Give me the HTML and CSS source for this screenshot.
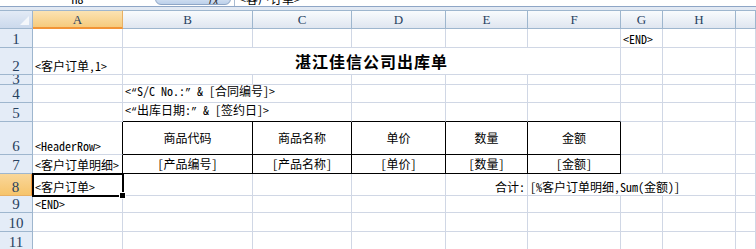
FILE: index.html
```html
<!DOCTYPE html>
<html>
	<head>
		<meta charset="utf-8">
		<title>出库单模板</title>
		<link rel="stylesheet" href="styles.css">
	</head>
	<body>
		<div class="fbar">
			<div class="namebox"><span>H8</span></div>
			<div class="fxbtn"><span>fx</span></div>
			<div class="formula"><span>&lt;客户订单&gt;</span></div>
		</div>
		<div class="strip"></div>
		<div class="sheet">
			<!-- column headers -->
			<div class="corner"></div>
			<div class="ch sel">A</div>
			<div class="ch">B</div>
			<div class="ch">C</div>
			<div class="ch">D</div>
			<div class="ch">E</div>
			<div class="ch">F</div>
			<div class="ch">G</div>
			<div class="ch">H</div>
			<div class="ch"></div>

			<!-- 1 -->
			<div class="rh">1</div>
			<div class="c"></div><div class="c"></div><div class="c"></div><div class="c"></div>
			<div class="c"></div><div class="c"></div>
			<div class="c">&lt;END&gt;</div>
			<div class="c"></div><div class="c"></div>

			<!-- 2 -->
			<div class="rh">2</div>
			<div class="c">&lt;客户订单,1&gt;</div>
			<div class="c title span5">湛江佳信公司出库单</div>
			<div class="c"></div><div class="c"></div><div class="c"></div>

			<!-- 3 -->
			<div class="rh short"><span>3</span></div>
			<div class="c"></div><div class="c"></div><div class="c"></div><div class="c"></div>
			<div class="c"></div><div class="c"></div><div class="c"></div><div class="c"></div><div class="c"></div>

			<!-- 4 -->
			<div class="rh">4</div>
			<div class="c"></div>
			<div class="c span2"><span>&lt;<span class="q">“</span>S/C No.:<span class="q">”</span> &amp; [合同编号]&gt;</span></div>
			<div class="c"></div><div class="c"></div><div class="c"></div>
			<div class="c"></div><div class="c"></div><div class="c"></div>

			<!-- 5 -->
			<div class="rh">5</div>
			<div class="c"></div>
			<div class="c span2 bb"><span>&lt;<span class="q">“</span>出库日期:<span class="q">”</span> &amp; [签约日]&gt;</span></div>
			<div class="c bb"></div><div class="c bb"></div><div class="c bb"></div>
			<div class="c"></div><div class="c"></div><div class="c"></div>

			<!-- 6 -->
			<div class="rh">6</div>
			<div class="c br">&lt;HeaderRow&gt;</div>
			<div class="c t">商品代码</div>
			<div class="c t">商品名称</div>
			<div class="c t">单价</div>
			<div class="c t">数量</div>
			<div class="c t">金额</div>
			<div class="c"></div><div class="c"></div><div class="c"></div>

			<!-- 7 -->
			<div class="rh">7</div>
			<div class="c br">&lt;客户订单明细&gt;</div>
			<div class="c t">[产品编号]</div>
			<div class="c t">[产品名称]</div>
			<div class="c t">[单价]</div>
			<div class="c t">[数量]</div>
			<div class="c t">[金额]</div>
			<div class="c"></div><div class="c"></div><div class="c"></div>

			<!-- 8 -->
			<div class="rh sel">8</div>
			<div class="c active">&lt;客户订单&gt;</div>
			<div class="c"></div><div class="c"></div><div class="c"></div>
			<div class="c right">合计:</div>
			<div class="c span3">[%客户订单明细,Sum(金额)]</div>
			<div class="c"></div>

			<!-- 9 -->
			<div class="rh">9</div>
			<div class="c">&lt;END&gt;</div>
			<div class="c"></div><div class="c"></div><div class="c"></div><div class="c"></div>
			<div class="c"></div><div class="c"></div><div class="c"></div><div class="c"></div>

			<!-- 10 -->
			<div class="rh">10</div>
			<div class="c"></div><div class="c"></div><div class="c"></div><div class="c"></div>
			<div class="c"></div><div class="c"></div><div class="c"></div><div class="c"></div><div class="c"></div>

			<!-- 11 -->
			<div class="rh">11</div>
			<div class="c"></div><div class="c"></div><div class="c"></div><div class="c"></div>
			<div class="c"></div><div class="c"></div><div class="c"></div><div class="c"></div><div class="c"></div>
		</div>
	</body>
</html>
```

FILE: styles.css
```css
body {
	margin: 0;
	background: #fff;
	font-family: "Noto Sans Mono CJK SC", "Noto Sans CJK SC", monospace;
	font-size: 12px;
	color: #000;
	overflow: hidden;
}

/* formula bar, only its lower edge is in view */
.fbar {
	display: flex;
	align-items: flex-end;
	height: 6px;
	overflow: hidden;
	background: #fff;
	border-bottom: 1px solid #8ea6c6;
}
.namebox {
	width: 155px;
	height: 14px;
	line-height: 14px;
	text-align: center;
	flex: none;
}
.fxbtn {
	width: 76px;
	height: 12px;
	margin-bottom: 1px;
	border: 1px solid #8ea6c6;
	border-radius: 7px;
	background: linear-gradient(#e4edf8, #bcd0ea);
	text-align: right;
	line-height: 10px;
	font-size: 11px;
	font-style: italic;
	color: #333;
	padding-right: 12px;
	box-sizing: border-box;
	flex: none;
}
.formula {
	flex: 1;
	height: 14px;
	line-height: 14px;
	margin-left: 3px;
	padding-left: 5px;
	border-left: 1px solid #a9bbd2;
}
.strip {
	height: 3px;
	background: #e2e9f3;
}

/* grid of cells */
.sheet {
	display: grid;
	grid-template-columns: 33px 90px 130px 99px 94px 82px 93px 42px 73px 1fr;
	grid-template-rows: 19px 19px 27px 10px 18px 19px 33px 19px 22px 17px 19px 19px;
}
.sheet > div {
	box-sizing: border-box;
	min-width: 0;
}

.corner {
	border-top: 1px solid #9eb6ce;
	border-right: 1px solid #9eb6ce;
	border-bottom: 1px solid #9eb6ce;
	background: linear-gradient(#e3ebf6, #cbd9ec);
	position: relative;
}
.corner::after {
	content: "";
	position: absolute;
	right: 3px;
	bottom: 3px;
	border-style: solid;
	border-width: 0 0 9px 9px;
	border-color: transparent transparent #f4f7fb transparent;
}

.ch {
	border-top: 1px solid #9eb6ce;
	border-right: 1px solid #9eb6ce;
	border-bottom: 1px solid #9eb6ce;
	background: linear-gradient(#f9fbfd, #dfe6f0);
	color: #27415f;
	font-family: "Liberation Serif", "Noto Sans Mono CJK SC", serif;
	font-size: 13px;
	line-height: 17px;
	text-align: center;
}
.ch.sel {
	background: linear-gradient(#fbe3b3, #f6cb7c);
	border-bottom: 2px solid #f29436;
	border-right-color: #e8b064;
}

.rh {
	border-right: 1px solid #9eb6ce;
	border-bottom: 1px solid #9eb6ce;
	background: #e4ecf7;
	color: #27415f;
	font-family: "Liberation Serif", "Noto Sans Mono CJK SC", serif;
	font-size: 15px;
	display: flex;
	align-items: flex-end;
	justify-content: center;
	line-height: 16px;
	overflow: hidden;
}
.rh.short {
	align-items: center;
	line-height: 9px;
}
.rh.short span {
	display: block;
	height: 9px;
	overflow: hidden;
}
.rh.sel {
	background: linear-gradient(#f9d79a, #f6c46b);
	border-right: 2px solid #f29436;
	border-bottom-color: #e8b064;
}

.c {
	border-right: 1px solid #d0d7e5;
	border-bottom: 1px solid #d0d7e5;
	display: flex;
	align-items: flex-end;
	padding: 0 2px 1px 2px;
	line-height: 15px;
	white-space: nowrap;
}
.q {
	font-family: "Liberation Mono", monospace;
	font-size: 10px;
}

.title {
	font-size: 16px;
	font-weight: 700;
	letter-spacing: 1px;
	justify-content: center;
	align-items: center;
	padding: 0;
}
.span5 { grid-column: span 5; }
.span2 { grid-column: span 2; }
.span3 { grid-column: span 3; }

.bb { border-bottom-color: #000; }
.br { border-right-color: #000; }
.t {
	border-right-color: #000;
	border-bottom-color: #000;
	justify-content: center;
	align-items: center;
}
.right { justify-content: flex-end; }

/* selected cell with fill handle */
.active {
	position: relative;
	outline: 2px solid #000;
	outline-offset: -1px;
	border-right-color: #000;
}
.active::after {
	content: "";
	position: absolute;
	right: -4px;
	bottom: -4px;
	width: 5px;
	height: 5px;
	background: #000;
	border: 1px solid #fff;
	z-index: 2;
}
```
